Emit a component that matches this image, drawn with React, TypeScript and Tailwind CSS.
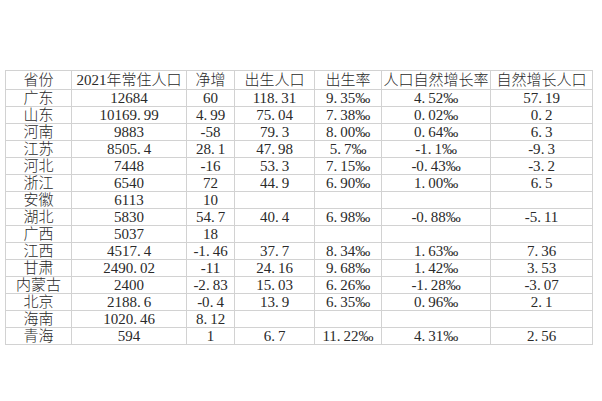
import * as React from "react";

const header = [
  "省份",
  "2021年常住人口",
  "净增",
  "出生人口",
  "出生率",
  "人口自然增长率",
  "自然增长人口",
];

// 单位：万人 / ‰
const rows: string[][] = [
  ["广东", "12684", "60", "118.31", "9.35‰", "4.52‰", "57.19"],
  ["山东", "10169.99", "4.99", "75.04", "7.38‰", "0.02‰", "0.2"],
  ["河南", "9883", "-58", "79.3", "8.00‰", "0.64‰", "6.3"],
  ["江苏", "8505.4", "28.1", "47.98", "5.7‰", "-1.1‰", "-9.3"],
  ["河北", "7448", "-16", "53.3", "7.15‰", "-0.43‰", "-3.2"],
  ["浙江", "6540", "72", "44.9", "6.90‰", "1.00‰", "6.5"],
  ["安徽", "6113", "10", "", "", "", ""],
  ["湖北", "5830", "54.7", "40.4", "6.98‰", "-0.88‰", "-5.11"],
  ["广西", "5037", "18", "", "", "", ""],
  ["江西", "4517.4", "-1.46", "37.7", "8.34‰", "1.63‰", "7.36"],
  ["甘肃", "2490.02", "-11", "24.16", "9.68‰", "1.42‰", "3.53"],
  ["内蒙古", "2400", "-2.83", "15.03", "6.26‰", "-1.28‰", "-3.07"],
  ["北京", "2188.6", "-0.4", "13.9", "6.35‰", "0.96‰", "2.1"],
  ["海南", "1020.46", "8.12", "", "", "", ""],
  ["青海", "594", "1", "6.7", "11.22‰", "4.31‰", "2.56"],
];

// 宋体的小数点是半角宽度，这里补一点间距
function Num({ value }: { value: string }) {
  const idx = value.indexOf(".");
  if (idx < 0) return <>{value}</>;
  return (
    <>
      {value.slice(0, idx)}
      <span className="pr-[3px]">.</span>
      {value.slice(idx + 1)}
    </>
  );
}

const cellBase =
  "flex items-center justify-center border-r border-b border-[#d2d2d2] leading-none whitespace-nowrap";

export default function App() {
  return (
    <div className="w-[602px] h-[401px] bg-white pt-[70px] pl-[5px] overflow-hidden">
      <div
        className="grid grid-cols-[66px_115px_48px_80px_67px_109px_102px] w-fit border-t border-l border-[#d2d2d2] text-[#2a2a2a]"
        style={{ fontFamily: '"Liberation Serif", "Noto Sans CJK SC", serif' }}
      >
        {/* 表头 */}
        {header.map((h) => (
          <div key={h} className={`${cellBase} h-[19px] text-[15px] font-light`}>
            {h}
          </div>
        ))}

        {/* 数据行 */}
        {rows.map((row) =>
          row.map((cell, i) => (
            <div
              key={row[0] + i}
              className={
                i === 0
                  ? `${cellBase} h-[17px] text-[15px] font-light`
                  : `${cellBase} h-[17px] text-[15px]`
              }
            >
              {i === 0 ? cell : <Num value={cell} />}
            </div>
          ))
        )}
      </div>
    </div>
  );
}
